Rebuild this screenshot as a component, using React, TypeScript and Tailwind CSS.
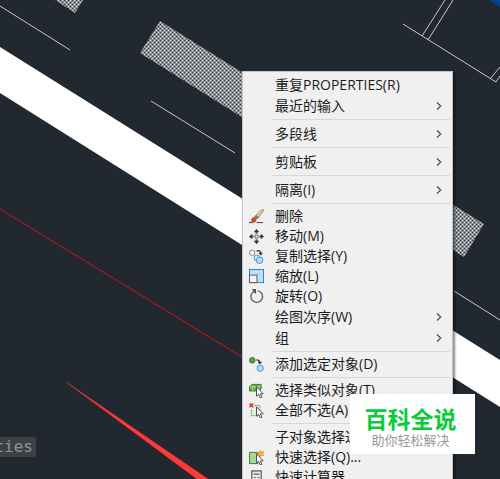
import type { ReactNode } from 'react';

type MenuItem = {
  label: string;
  icon?: ReactNode;
  submenu?: boolean;
};

const Cursor = () => (
  <path d="M8 4v10l2.300-2 1.700 4 1.800-.8-1.700-3.700h3z" fill="#fff" stroke="#444" strokeWidth="1" />
);

const icons = {
  erase: (
    <>
      <path d="M0 14.500h4M8 14.500h7" stroke="#333" />
      <path d="M12 2 15 0l1 1.500L9.500 10 6 8z" fill="#ecc98a" stroke="#777" strokeWidth=".7" />
      <path d="m7.500 6.500 3 2-2 2.500-3-2z" fill="#777" />
      <path d="M5 8.500 8 11c0 2.500-2 4-4 3.500S1.500 9.500 5 8.500z" fill="#c8481c" />
    </>
  ),
  move: (
    <>
      <path d="M8 2v3M8 11v3M2 8h3M11 8h3" stroke="#444" strokeWidth="1.800" />
      <path d="m8 0 3 3.500H5zM8 16l3-3.500H5zM0 8l3.500-3v6zM16 8l-3.500-3v6z" fill="#333" />
      <rect x="6.500" y="6.500" width="3" height="3" fill="#fff" stroke="#666" />
    </>
  ),
  copy: (
    <>
      <circle cx="3.500" cy="4" r="2.800" fill="#fff" stroke="#777" />
      <path d="M8 2.500c2.500-1.500 4-.5 4.500 2" fill="none" stroke="#333" strokeWidth="1.300" />
      <path d="M10 4h5l-2.500 3z" fill="#333" />
      <circle cx="8.500" cy="9.500" r="3" fill="#d8efff" stroke="#3c8fd0" />
      <circle cx="11.300" cy="12" r="3.500" fill="#b5ddf7" stroke="#3c8fd0" />
    </>
  ),
  scale: (
    <>
      <rect x=".5" y=".5" width="15" height="14" fill="#b9e0f6" stroke="#2f7fb8" />
      <rect x=".5" y="6.500" width="8" height="8" fill="#f4f4f4" stroke="#555" />
    </>
  ),
  rotate: (
    <>
      <path d="M5.500 2.500A6.200 6.200 0 1 0 9.500 2" fill="none" stroke="#666" strokeWidth="1.500" />
      <path d="M3 0h4.500v5.500L5.500 3.500z" fill="#555" />
    </>
  ),
  addSelected: (
    <>
      <circle cx="3.500" cy="3.500" r="3" fill="#5fa044" stroke="#3a7426" />
      <path d="M8 3c2.500 0 3.500 1.500 3.500 3" fill="none" stroke="#333" strokeWidth="1.200" />
      <path d="M9 5h5l-2.500 3z" fill="#333" />
      <circle cx="12" cy="12" r="3.300" fill="#b5ddf7" stroke="#3c8fd0" />
    </>
  ),
  selectSimilar: (
    <>
      <path d="M.5 4 3 1.500h10V6L11 8.500H.5z" fill="#66ad4b" stroke="#39782a" />
      <path d="M1 4h10v4M11 4l2-2M4 4v4" fill="none" stroke="#d3edc7" strokeWidth=".7" />
      <Cursor />
    </>
  ),
  deselect: (
    <>
      <path d="M6 2.500h5.500v11h-9V7" fill="#dff0d6" stroke="#4b9b3d" strokeDasharray="2 1" />
      <path d="m.500 .500 4 4M4.500 .500l-4 4" stroke="#d42030" strokeWidth="1.500" />
      <Cursor />
    </>
  ),
  quickSelect: (
    <>
      <path d="M.5 2.500h9v12h-9z" fill="#a9d795" stroke="#2f8128" />
      <path d="m12 0 1 2.500 3-1-1.500 2.500L16 6l-3-.5-1.500 2-.5-3L9 3l2.500-.5z" fill="#ffb52c" stroke="#f07818" strokeWidth=".6" />
      <Cursor />
    </>
  ),
  calculator: (
    <>
      <rect x="3" y="1" width="10" height="14" fill="#eee" stroke="#555" strokeWidth="1.300" />
      <path d="M5 4.500h6M5 8h2M9 8h2M5 11h2M9 11h2" stroke="#555" strokeWidth="1.300" />
    </>
  ),
};

const menuGroups: { gap: string; items: MenuItem[] }[] = [
  {
    gap: 'h-0',
    items: [{ label: '重复PROPERTIES(R)' }, { label: '最近的输入', submenu: true }],
  },
  { gap: 'h-[7px]', items: [{ label: '多段线', submenu: true }] },
  { gap: 'h-[7px]', items: [{ label: '剪贴板', submenu: true }] },
  { gap: 'h-[7px]', items: [{ label: '隔离(I)', submenu: true }] },
  {
    gap: 'h-1.5',
    items: [
      { label: '删除', icon: icons.erase },
      { label: '移动(M)', icon: icons.move },
      { label: '复制选择(Y)', icon: icons.copy },
      { label: '缩放(L)', icon: icons.scale },
      { label: '旋转(O)', icon: icons.rotate },
      { label: '绘图次序(W)', submenu: true },
      { label: '组', submenu: true },
    ],
  },
  { gap: 'h-1.5', items: [{ label: '添加选定对象(D)', icon: icons.addSelected }] },
  {
    gap: 'h-1.5',
    items: [
      { label: '选择类似对象(T)', icon: icons.selectSimilar },
      { label: '全部不选(A)', icon: icons.deselect },
    ],
  },
  {
    gap: 'h-[7px]',
    items: [
      { label: '子对象选择过滤器' },
      { label: '快速选择(Q)...', icon: icons.quickSelect },
      { label: '快速计算器', icon: icons.calculator },
    ],
  },
];

const MenuRow = ({ item }: { item: MenuItem }) => (
  <button
    type="button"
    role="menuitem"
    aria-haspopup={item.submenu ? 'menu' : undefined}
    className={`flex w-full items-center pr-2.5 text-left hover:bg-[#dcdcdc] ${item.submenu ? 'h-[21px]' : 'h-5'}`}
  >
    <span className="flex w-8 shrink-0 pl-1.5">
      {item.icon && (
        <svg viewBox="0 0 16 16" className="size-[15px]" aria-hidden="true">
          {item.icon}
        </svg>
      )}
    </span>
    <span className="flex-1 whitespace-nowrap">{item.label}</span>
    {item.submenu && (
      <svg viewBox="0 0 6 10" className="h-2.5 w-1.5" aria-hidden="true">
        <path d="m1 1.500 3.700 3.500L1 8.500" fill="none" stroke="#555" strokeWidth="1.300" />
      </svg>
    )}
  </button>
);

const ContextMenu = () => (
  <div
    role="menu"
    className="absolute left-[242px] top-[71px] w-[211px] border border-[#c4c4c4] bg-[#f0f0f0] py-[3px] font-['Open_Sans','Noto_Sans_CJK_SC',sans-serif] text-sm leading-5 text-[#1c1c1c] shadow-[2px_2px_2px_rgba(0,0,0,0.45)]"
  >
    {menuGroups.map(({ gap, items }, index) => (
      <div key={items[0].label}>
        {index > 0 && (
          <div role="separator" className={`ml-7 mr-0.5 flex items-center ${gap}`}>
            <div className="h-px w-full bg-[#d7d7d7]" />
          </div>
        )}
        {items.map((item) => (
          <MenuRow key={item.label} item={item} />
        ))}
      </div>
    ))}
  </div>
);

const Drawing = () => (
  <svg className="absolute inset-0 h-full w-full" aria-hidden="true">
    <defs>
      <pattern id="hatch" width="4" height="4" patternUnits="userSpaceOnUse">
        <rect width="4" height="4" fill="#8d9194" />
        <path d="M0 0h1v1H0zM2 2h1v1H2z" fill="#2c3239" />
        <path d="M2 0h1v1H2zM0 2h1v1H0z" fill="#d8dadb" />
      </pattern>
    </defs>
    <path d="M0 47 500 360V407L0 93z" fill="#fff" />
    <path d="M160 21 484 224 464 257 140 53zM55 0 75 13 83 0z" fill="url(#hatch)" />
    <g fill="none" stroke="#c5c8cb">
      <path d="M0 6 70 50M151 101 235 153M454 291 500 320" />
      <path d="M403 24 496 82 500 76M422 36 445 0M428 40 453 0M490 79 500 67" />
    </g>
    <path d="M489 0H500V7z" fill="#06418a" />
    <path d="M0 209 242 357" stroke="#d01418" />
    <path d="M66 382 208 479H197z" fill="#ff3838" stroke="#ff3838" strokeWidth=".4" />
  </svg>
);

export default function App() {
  return (
    <main className="relative h-screen w-full overflow-hidden bg-[#222830]">
      <Drawing />
      <div className="absolute left-0 top-[437px] flex w-9 justify-end overflow-hidden rounded-r-xs bg-[#3d4146] pr-[3px] font-['DejaVu_Sans_Mono',monospace] text-base leading-5 text-[#8d9195]">
        ties
      </div>
      <ContextMenu />
      <div className="absolute left-[350px] top-[394px] h-[60px] w-[125px] bg-white pr-1 pt-2.5 text-center font-['Noto_Sans_CJK_SC',sans-serif]">
        <p className="text-[23px] font-bold leading-7 text-[#08cc38]">百科全说</p>
        <p className="text-[13px] leading-4 text-[#999]">助你轻松解决</p>
      </div>
    </main>
  );
}
